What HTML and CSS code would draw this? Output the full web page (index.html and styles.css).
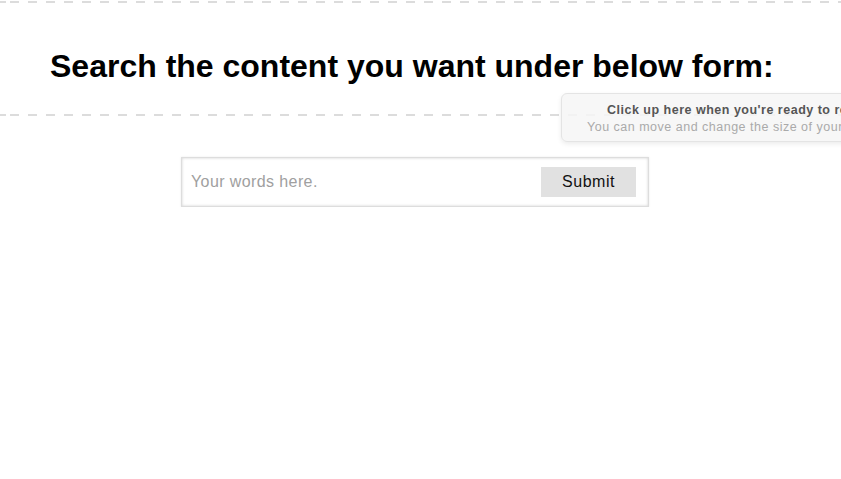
FILE: index.html
```html
<!DOCTYPE html>
<html>
<head>
<meta charset="utf-8">
<link rel="stylesheet" href="styles.css">
</head>
<body>
<header class="banner">
  <div class="dash-line top"></div>
  <h1 class="title">Search the content you want under below form:</h1>
  <div class="dash-line bottom"></div>
  <div class="tip">
    <div class="tip-title">Click up here when you're ready to record</div>
    <div class="tip-sub">You can move and change the size of your recording area</div>
  </div>
</header>
<main class="content">
  <form class="search">
    <input class="field" type="text" placeholder="Your words here.">
    <button class="btn" type="button">Submit</button>
  </form>
</main>
</body>
</html>
```

FILE: styles.css
```css
html, body {
  margin: 0;
  padding: 0;
  background: #fff;
  font-family: "Liberation Sans", Arial, Helvetica, sans-serif;
}
.banner {
  position: relative;
  padding-top: 1px;
}
.dash-line {
  height: 2px;
  background: repeating-linear-gradient(90deg, #dcdcdc 0 9px, transparent 9px 18px);
  background-position: 10px 0;
}
.title {
  margin: 0;
  padding: 45px 0 29px 50px;
  font-size: 32px;
  font-weight: bold;
  line-height: 37px;
  color: #000;
}
.tip {
  position: absolute;
  left: 561px;
  top: 93px;
  width: 330px;
  height: 49px;
  box-sizing: border-box;
  border: 1px solid #e4e4e4;
  border-radius: 6px;
  background: rgba(246, 246, 246, 0.85);
  box-shadow: 0 2px 5px rgba(0,0,0,0.08);
  padding-top: 8px;
  font-size: 12.5px;
  letter-spacing: 0.5px;
  line-height: 17px;
  white-space: nowrap;
  overflow: hidden;
}
.tip-title {
  font-weight: bold;
  color: #555;
  padding-left: 45px;
}
.tip-sub {
  color: #aaa;
  padding-left: 25px;
}
.content {
  display: flex;
  padding: 41px 0 0 181px;
}
.search {
  display: flex;
  align-items: center;
  width: 468px;
  height: 50px;
  box-sizing: border-box;
  border: 1px solid #ddd;
  box-shadow: inset 0 0 3px rgba(0,0,0,0.18), 0 0 2px rgba(0,0,0,0.08);
  padding: 0 12px 0 9px;
  margin: 0;
}
.field {
  flex: 1;
  border: none;
  outline: none;
  background: transparent;
  font-family: "Liberation Sans", Arial, Helvetica, sans-serif;
  font-size: 16px;
  letter-spacing: 0.4px;
  color: #333;
  padding: 0;
}
.field::placeholder {
  color: #a0a0a0;
}
.btn {
  width: 95px;
  height: 30px;
  border: none;
  background: #e1e1e1;
  font-family: "Liberation Sans", Arial, Helvetica, sans-serif;
  font-size: 16px;
  letter-spacing: 0.5px;
  color: #111;
  padding: 0;
}
```
